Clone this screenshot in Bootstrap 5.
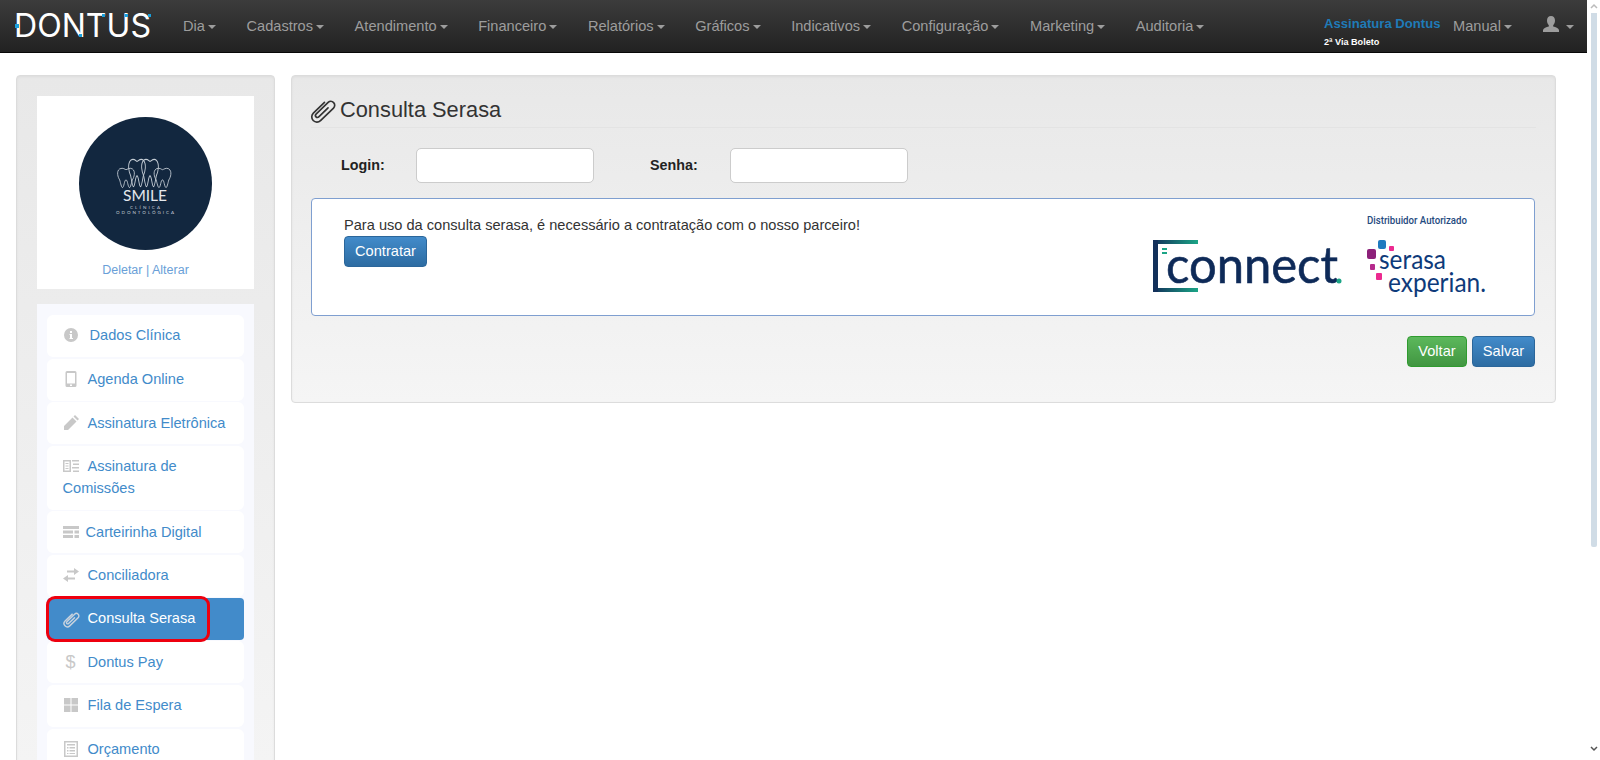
<!DOCTYPE html>
<html lang="pt-BR">

<head>
  <meta charset="UTF-8">
  <meta name="viewport" content="width=device-width, initial-scale=1.0">
  <title>Consulta Serasa</title>
  <link href="https://cdn.jsdelivr.net/npm/bootstrap@5.3.3/dist/css/bootstrap.min.css" rel="stylesheet">
  <style>
    html, body { height: 760px; overflow: hidden; }
    body { font-family: "Liberation Sans", Arial, sans-serif; font-size: 14.6px; color: #333; background: #fff; }
    a { text-decoration: none; }
    .page-main { width: 1587px; height: 760px; overflow: hidden; }

    .top-bar { height: 53px; padding: 0; background: linear-gradient(to bottom, #3c3c3c, #222); border-bottom: 1px solid #080808; }
    .top-bar .navbar-brand { margin: 0; padding: 0; width: 175px; height: 52px; }
    .top-bar .nav-link { color: #9d9d9d; padding: 0 15px; line-height: 52px; font-size: 14.6px; }
    .top-bar .dropdown-toggle::after { margin-left: 3px; vertical-align: 2px; border-top-width: 4px; border-right-width: 4px; border-left-width: 4px; }
    .top-nav-items { gap: 14.600px; }
    .sign-box { width: 114px; line-height: 1; padding-top: 17px; white-space: nowrap; }
    .sign-title { color: #1f7bb8; font-weight: 700; font-size: 13.100px; display: block; }
    .sign-sub { color: #fff; font-weight: 700; font-size: 9.100px; display: block; margin-top: 8px; }
    .user-link { margin-left: 1px; padding-right: 13px !important; }

    .fake-scroll { width: 13px; height: 760px; }
    .scroll-up { height: 13px; padding-left: 3px; color: #bbb; }
    .scroll-thumb { width: 6px; height: 534px; margin-left: 4px; background: #d0dce6; border-radius: 0 0 2px 2px; }
    .scroll-down { margin-top: 198px; padding-left: 3px; color: #555; }

    .content-area { padding: 22px 0 0 16px; gap: 16px; }
    .well-box { background: linear-gradient(to bottom, #e8e8e8, #f5f5f5); border: 1px solid #dcdcdc; border-radius: 4px; box-shadow: inset 0 1px 3px rgba(0, 0, 0, .05); }
    .side-well { width: 259px; flex: none; padding: 20px; padding-bottom: 40px; }
    .logo-box { background: #fff; height: 193px; padding-top: 21px; margin-bottom: 15px; text-align: center; }
    .logo-links { margin-top: 10px; color: #6a9fd8; font-size: 12.500px; line-height: 20px; }
    .logo-links a { color: #6a9fd8; }
    .menu-box { background: #f8f9fe; margin: 0; padding: 11px 10px 10px 9.500px; }
    .menu-list { gap: 1.700px; border-radius: 0; }
    .menu-list .menu-item { background: #fff; border: 0; border-radius: 6px; color: #428bca; padding: 10.250px 16px; line-height: 21.500px; margin: 0; }
    .menu-list .menu-item.active { background: #428bca; color: #fff; border-radius: 4px; }
    .menu-icon { display: inline-block; width: 16px; height: 16px; vertical-align: -3px; fill: #c8c8c8; margin-right: 9px; }
    .icon-info { margin-right: 11px; }
    .icon-card { margin-right: 7px; }
    .menu-dollar { display: inline-block; width: 16px; margin-right: 9px; color: #c8c8c8; font-size: 18px; line-height: 18px; text-align: center; vertical-align: -1px; }
    .clip-icon { fill: none; stroke-linecap: round; }
    .menu-clip { width: 20px; height: 20px; margin: -3px 7px -3px -2px; vertical-align: -4px; color: #c8c8c8; stroke-width: 1.700; }
    .menu-item.active .menu-clip { color: #c9d3de; }
    .red-mark { position: absolute; left: -1px; top: -2px; width: 164px; height: 46px; border: 3px solid #ee000f; border-radius: 9px; }

    .main-well { width: 1265px; height: 328px; flex: none; padding: 19px; }
    .page-title { font-size: 21.800px; font-weight: 400; color: #333; margin: 0 0 19px; height: 33px; line-height: 29px; border-bottom: 1px solid #e3e3e3; }
    .title-clip { width: 31px; height: 31px; vertical-align: -7px; margin: -3px 2px -3px -4px; color: #333; stroke-width: 1.300; }
    .login-row { height: 36px; margin-bottom: 15px; }
    .login-row label { font-weight: 700; color: #222; font-size: 14.300px; margin: 0; padding-top: 1px; }
    .lbl-login { width: 75px; margin-left: 30px !important; }
    .lbl-senha { width: 80px; margin-left: 56px !important; }
    .login-row .form-control { width: 178px; height: 35px; border-radius: 5px; border-color: #ccc; flex: none; }
    .info-box { width: 1224px; height: 118px; background: #fff; border: 1px solid #7f9fd0; border-radius: 4px; padding: 16px 32px; margin-bottom: 20px; position: relative; }
    .info-box p { margin: 0; line-height: 21px; }
    .partner-logos { position: absolute; left: 840px; top: 12px; }
    .btn-blue, .btn-green { color: #fff; font-size: 14.600px; padding: 0; height: 31px; border-radius: 4px; }
    .btn-blue { background: linear-gradient(to bottom, #428bca, #2d6ca2); border: 1px solid #2b669a; }
    .btn-green { background: linear-gradient(to bottom, #5cb85c, #419641); border: 1px solid #2f9b2f; }
    .btn-hire { width: 83px; }
    .btn-back { width: 60px; margin-right: 5px; }
    .btn-save { width: 63px; }
    .save-row { width: 1224px; }
  </style>
</head>

<body>
  <svg width="0" height="0" class="d-block">
    <symbol id="clip" viewBox="0 0 24 24">
      <g transform="rotate(46 12 12)">
        <path stroke="currentColor" d="M8 6v12a4 4 0 0 0 8 0V4a3 3 0 0 0-6 0v13a1.400 1.400 0 0 0 3 0V7"></path>
      </g>
    </symbol>
  </svg>

  <div class="d-flex">
    <div class="page-main">
      <nav class="navbar navbar-expand top-bar">
        <a class="navbar-brand d-block" href="#">
          <svg width="168" height="52" viewBox="0 0 168 52">
            <text x="14" y="37" font-family="Inter, sans-serif" font-size="32" font-weight="400" fill="#fff" textLength="137" lengthAdjust="spacingAndGlyphs">DONTUS</text>
            <rect x="15" y="24" width="4" height="4" fill="#19a0dc"></rect>
            <rect x="79" y="34" width="3" height="3" fill="#19a0dc"></rect>
            <rect x="102" y="14" width="3" height="3" fill="#19a0dc"></rect>
            <rect x="125" y="14" width="3" height="3" fill="#19a0dc"></rect>
            <rect x="148" y="14" width="3" height="3" fill="#19a0dc"></rect>
          </svg>
        </a>
        <ul class="navbar-nav top-nav-items">
          <li class="nav-item"><a class="nav-link dropdown-toggle" href="#">Dia</a></li>
          <li class="nav-item"><a class="nav-link dropdown-toggle" href="#">Cadastros</a></li>
          <li class="nav-item"><a class="nav-link dropdown-toggle" href="#">Atendimento</a></li>
          <li class="nav-item"><a class="nav-link dropdown-toggle" href="#">Financeiro</a></li>
          <li class="nav-item"><a class="nav-link dropdown-toggle" href="#">Relatórios</a></li>
          <li class="nav-item"><a class="nav-link dropdown-toggle" href="#">Gráficos</a></li>
          <li class="nav-item"><a class="nav-link dropdown-toggle" href="#">Indicativos</a></li>
          <li class="nav-item"><a class="nav-link dropdown-toggle" href="#">Configuração</a></li>
          <li class="nav-item"><a class="nav-link dropdown-toggle" href="#">Marketing</a></li>
          <li class="nav-item"><a class="nav-link dropdown-toggle" href="#">Auditoria</a></li>
        </ul>
        <div class="d-flex ms-auto">
          <a class="sign-box" href="#"><span class="sign-title">Assinatura Dontus</span><span class="sign-sub">2ª Via Boleto</span></a>
          <a class="nav-link dropdown-toggle" href="#">Manual</a>
          <a class="nav-link dropdown-toggle user-link" href="#">
            <svg width="16" height="17" viewBox="0 0 16 17" fill="#9d9d9d" style="vertical-align: -2px">
              <path d="M8 0c2.600 0 4 2 4 4.600 0 2-.8 3.600-1.800 4.600v1.300c2.500.8 5.300 1.600 5.800 3.500v2H0v-2c.5-1.900 3.300-2.700 5.800-3.500V9.200C4.800 8.200 4 6.600 4 4.600 4 2 5.400 0 8 0z"></path>
            </svg>
          </a>
        </div>
      </nav>

      <div class="d-flex align-items-start content-area">
        <aside class="well-box side-well">
          <div class="logo-box">
            <svg width="133" height="133" viewBox="0 0 133 133">
              <defs>
                <path id="tooth" fill="none" stroke="#c5cdd5" stroke-width="1" d="M3 1C7-1 9 2 10 2s4-3 7-1c4 3 2 10 0 13-1 4-2 9-3 9-2 0-2-9-4-9s-2 9-4 9c-1 0-2-5-3-9C1 11-1 4 3 1z"></path>
              </defs>
              <circle cx="66.500" cy="66.500" r="66.500" fill="#12273f"></circle>
              <use href="#tooth" transform="translate(38 51) scale(.9 .85)"></use>
              <use href="#tooth" transform="translate(49 42) scale(.9 1.200)"></use>
              <use href="#tooth" transform="translate(62 42) scale(.9 1.200)"></use>
              <use href="#tooth" transform="translate(74.500 51) scale(.9 .85)"></use>
              <text x="44" y="84" font-family="Lato, sans-serif" font-size="16" fill="#e4e8ec" textLength="44" lengthAdjust="spacingAndGlyphs">SMILE</text>
              <text x="51" y="91.500" font-family="Lato, sans-serif" font-size="4.500" fill="#c5cdd5" textLength="30">CLÍNICA</text>
              <text x="37" y="96.500" font-family="Lato, sans-serif" font-size="4.500" fill="#c5cdd5" textLength="58">ODONTOLÓGICA</text>
            </svg>
            <div class="logo-links"><a href="#">Deletar</a> | <a href="#">Alterar</a></div>
          </div>

          <div class="menu-box">
            <div class="list-group menu-list">
              <a class="list-group-item menu-item" href="#">
                <svg class="menu-icon icon-info" viewBox="0 0 16 16"><path fill-rule="evenodd" d="M8 1a7 7 0 1 0 0 14A7 7 0 0 0 8 1zM7 4h2v2H7zM6.500 7H9v4h1v1H6.500v-1H7V8h-.5z"></path></svg>Dados Clínica
              </a>
              <a class="list-group-item menu-item" href="#">
                <svg class="menu-icon" viewBox="0 0 16 16"><path fill-rule="evenodd" d="M4 0h8a1.500 1.500 0 0 1 1.500 1.500v13A1.500 1.500 0 0 1 12 16H4a1.500 1.500 0 0 1-1.500-1.500v-13A1.500 1.500 0 0 1 4 0zM4 2v10.500h8V2zM7 13.500v1.500h2v-1.500z"></path></svg>Agenda Online
              </a>
              <a class="list-group-item menu-item" href="#">
                <svg class="menu-icon" viewBox="0 0 16 16"><path d="M12 0l4 4-1.500 1.500-4-4zM9.500 2.500l4 4L5 15H1v-4z"></path></svg>Assinatura Eletrônica
              </a>
              <a class="list-group-item menu-item" href="#">
                <svg class="menu-icon" viewBox="0 0 16 16"><path fill-rule="evenodd" d="M0 2h8v12H0zM1.500 3.500v9h5v-9zM2.500 5h3v1h-3zM2.500 7.500h3v1h-3zM2.500 10h3v1h-3zM9 2h7v1.500H9zM10 5.500h6V7h-6zM9 9h7v1.500H9zM10 12.500h6V14h-6z"></path></svg>Assinatura de Comissões
              </a>
              <a class="list-group-item menu-item" href="#">
                <svg class="menu-icon icon-card" viewBox="0 0 16 16"><path d="M0 2h16v3H0zM0 6.500h10v3H0zM11.500 6.500H16v3h-4.500zM0 11h10v3H0zM11.500 11H16v3h-4.500z"></path></svg>Carteirinha Digital
              </a>
              <a class="list-group-item menu-item" href="#">
                <svg class="menu-icon" viewBox="0 0 16 16"><path d="M11 1l5 3.500L11 8V5.500H4v-2h7zM5 8v2.500h7v2H5V15l-5-3.500z"></path></svg>Conciliadora
              </a>
              <a class="list-group-item menu-item active position-relative" href="#">
                <svg class="clip-icon menu-clip" viewBox="0 0 24 24"><use href="#clip"></use></svg>Consulta Serasa
                <span class="red-mark"></span>
              </a>
              <a class="list-group-item menu-item" href="#"><span class="menu-dollar">$</span>Dontus Pay</a>
              <a class="list-group-item menu-item" href="#">
                <svg class="menu-icon" viewBox="0 0 16 16"><path d="M1 1h6.500v6.500H1zM8.500 1H15v6.500H8.500zM1 8.500h6.500V15H1zM8.500 8.500H15V15H8.500z"></path></svg>Fila de Espera
              </a>
              <a class="list-group-item menu-item" href="#">
                <svg class="menu-icon" viewBox="0 0 16 16"><path fill-rule="evenodd" d="M1 0h14v16H1zM2.500 1.500v13h11v-13zM4 3h8v1.500H4zM4 6h1.500v1.500H4zM6.500 6H12v1.500H6.500zM4 9h1.500v1.500H4zM6.500 9H12v1.500H6.500zM4 12h1.500v1H4zM6.500 12H12v1H6.500z"></path></svg>Orçamento
              </a>
            </div>
          </div>
        </aside>

        <main class="well-box main-well">
          <h3 class="page-title">
            <svg class="clip-icon title-clip" viewBox="0 0 24 24"><use href="#clip"></use></svg>Consulta Serasa
          </h3>
          <div class="d-flex align-items-center login-row">
            <label class="lbl-login" for="login">Login:</label>
            <input class="form-control" id="login" type="text">
            <label class="lbl-senha" for="senha">Senha:</label>
            <input class="form-control" id="senha" type="password">
          </div>
          <div class="info-box">
            <p>Para uso da consulta serasa, é necessário a contratação com o nosso parceiro!</p>
            <button class="btn btn-blue btn-hire" type="button">Contratar</button>
            <svg class="partner-logos" width="370" height="100" viewBox="0 0 370 100">
              <defs>
                <linearGradient id="connectBar" x1="0" x2="1" y1="0" y2="0">
                  <stop offset="0" stop-color="#12305a"></stop>
                  <stop offset="1" stop-color="#1ba586"></stop>
                </linearGradient>
              </defs>
              <!-- connect -->
              <rect x="1" y="29" width="45" height="4" fill="url(#connectBar)"></rect>
              <rect x="1" y="77" width="45" height="4" fill="url(#connectBar)"></rect>
              <rect x="1" y="29" width="5" height="52" fill="#12305a"></rect>
              <rect x="10" y="37" width="5" height="2" fill="#1ba586"></rect>
              <rect x="10" y="41" width="5" height="2" fill="#1ba586"></rect>
              <text x="14" y="72" font-family="Lato, sans-serif" font-size="50" fill="#0e2a58" stroke="#0e2a58" stroke-width=".6" textLength="172" lengthAdjust="spacingAndGlyphs">connect</text>
              <circle cx="187" cy="70" r="2.500" fill="#1ba586"></circle>
              <!-- serasa experian -->
              <text x="215" y="13" font-family="Roboto, sans-serif" font-size="10" font-weight="500" fill="#1f4b80" textLength="100" lengthAdjust="spacingAndGlyphs">Distribuidor Autorizado</text>
              <rect x="226" y="29" width="8" height="9" rx="2" fill="#1f7ac0"></rect>
              <rect x="237" y="35" width="5" height="5" rx="1" fill="#ec2a90"></rect>
              <rect x="215" y="38" width="9" height="10" rx="2" fill="#8c2079"></rect>
              <rect x="218" y="53" width="5" height="6" rx="1" fill="#b52a8c"></rect>
              <rect x="224" y="62" width="6" height="7" rx="1" fill="#ec2a90"></rect>
              <text x="227" y="58" font-family="Lato, sans-serif" font-size="27" fill="#0e3a7a" textLength="67" lengthAdjust="spacingAndGlyphs">serasa</text>
              <text x="236" y="81" font-family="Lato, sans-serif" font-size="27" fill="#0e3a7a" textLength="98" lengthAdjust="spacingAndGlyphs">experian.</text>
            </svg>
          </div>
          <div class="d-flex justify-content-end save-row">
            <button class="btn btn-green btn-back" type="button">Voltar</button>
            <button class="btn btn-blue btn-save" type="button">Salvar</button>
          </div>
        </main>
      </div>
    </div>

    <div class="fake-scroll">
      <div class="scroll-up">
        <svg class="d-block" width="8" height="13" viewBox="0 0 8 13"><path d="M1 8l3-3 3 3" fill="none" stroke="currentColor" stroke-width="1.500"></path></svg>
      </div>
      <div class="scroll-thumb"></div>
      <div class="scroll-down">
        <svg class="d-block" width="8" height="8" viewBox="0 0 8 8"><path d="M1 2l3 3 3-3" fill="none" stroke="currentColor" stroke-width="1.500"></path></svg>
      </div>
    </div>
  </div>

  <script src="https://cdn.jsdelivr.net/npm/bootstrap@5.3.3/dist/js/bootstrap.bundle.min.js"></script>
</body>

</html>
